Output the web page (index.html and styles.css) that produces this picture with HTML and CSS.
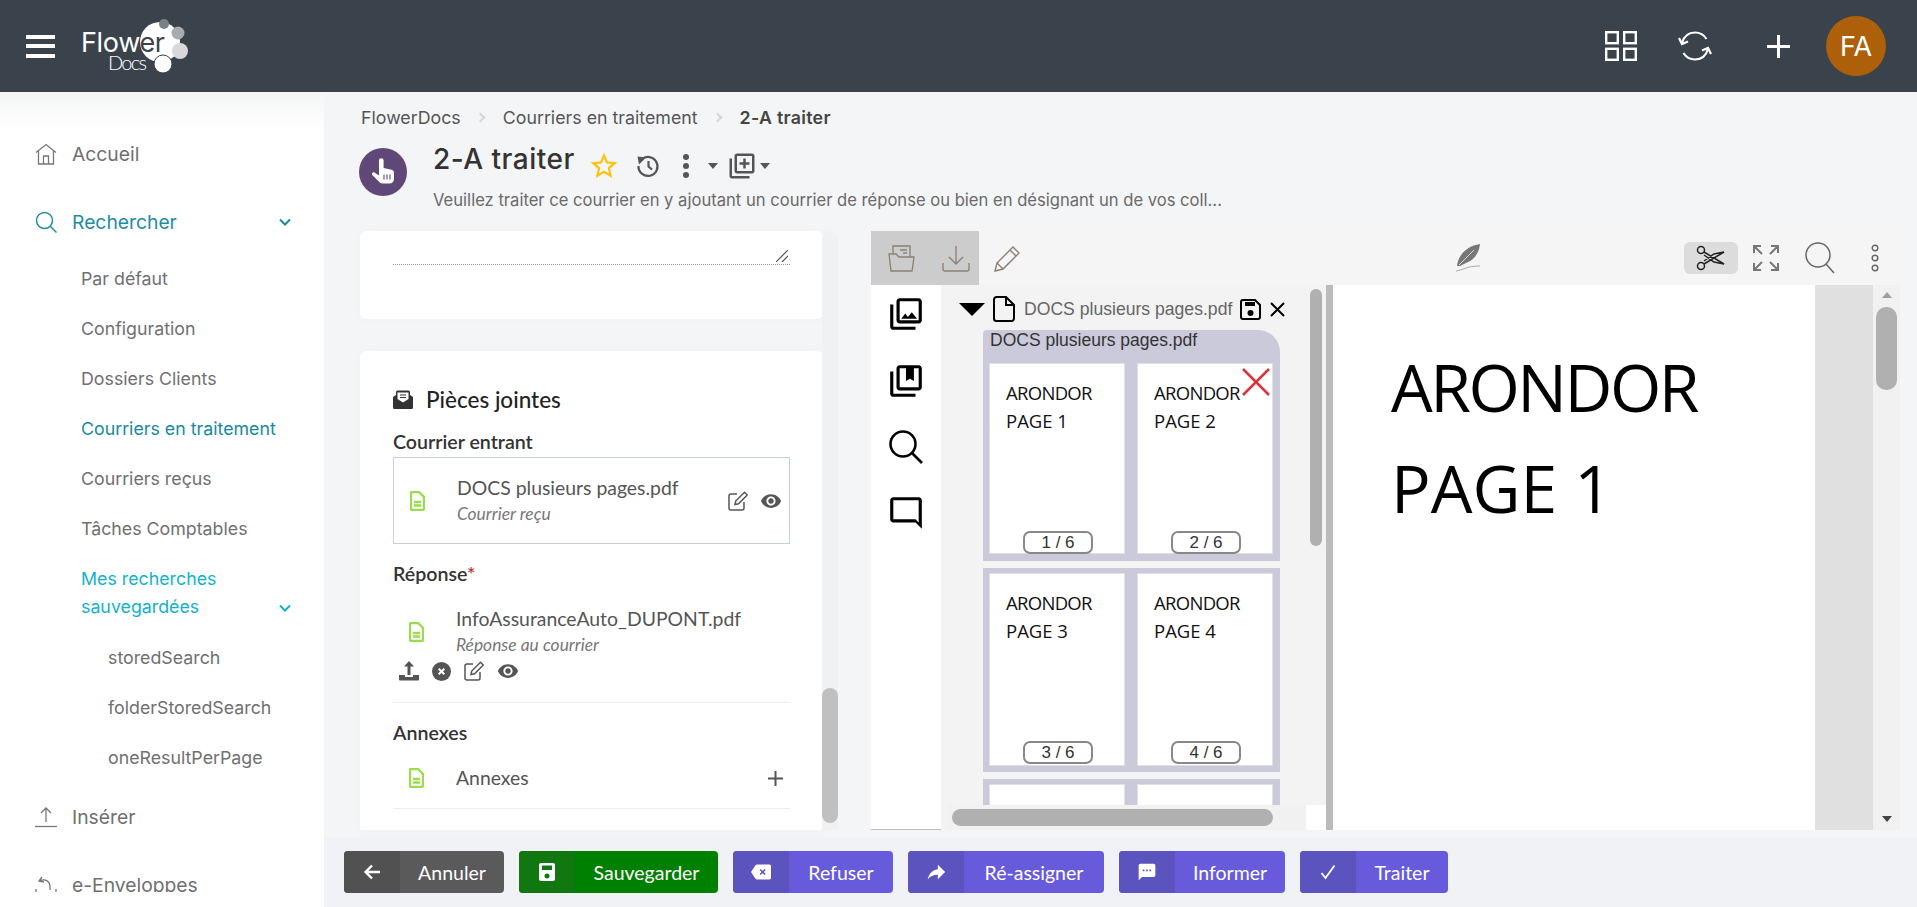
FILE: index.html
```html
<!DOCTYPE html>
<html lang="fr">
<head>
<meta charset="utf-8">
<title>FlowerDocs</title>
<link rel="stylesheet" href="styles.css">
</head>
<body>
<div class="app">
  <header class="topbar">
    <div class="burger"><span></span><span></span><span></span></div>
    <svg class="logo" width="120" height="64" viewBox="0 0 120 64">
      <circle cx="80" cy="28" r="20" fill="#fff"/>
      <text class="logo-word" x="1" y="38" textLength="84">Flow<tspan class="logo-dark">er</tspan></text>
      <text class="logo-sub" x="28" y="56" textLength="39">Docs</text>
      <circle cx="84" cy="10" r="5" fill="#7b8087"/>
      <circle cx="98" cy="19" r="6.500" fill="#a8abb0"/>
      <circle cx="100" cy="37" r="8" fill="#d7d8d9"/>
      <circle cx="83" cy="50" r="9" fill="#fff" stroke="#3a424c"/>
    </svg>
    <div class="topbar-tools">
      <svg class="tool-grid" width="32" height="30" viewBox="0 0 32 30" fill="none" stroke="#fff" stroke-width="2.400"><rect x="1.200" y="1.200" width="11.600" height="11"/><rect x="19.200" y="1.200" width="11.600" height="11"/><rect x="1.200" y="17.800" width="11.600" height="11"/><rect x="19.200" y="17.800" width="11.600" height="11"/></svg>
      <svg class="tool-sync" width="34" height="30" viewBox="0 0 34 30" fill="none" stroke="#fff" stroke-width="2.200"><path d="M4 12C6 5 11 1.500 17 1.500c5 0 9 2.500 11.500 6.500"/><path d="M30 18c-2 7-7 10.500-13 10.500-5 0-9-2.500-11.500-6.500"/><path d="M1 7l3 6 6-2.500"/><path d="M33 23l-3-6-6 2.500"/></svg>
      <svg class="tool-plus" width="23" height="23" viewBox="0 0 23 23" fill="#fff"><rect x="10" width="3" height="23"/><rect y="10" width="23" height="3"/></svg>
      <div class="avatar">FA</div>
    </div>
  </header>

  <div class="layout">
    <nav class="sidebar">
      <a class="nav-item">
        <svg width="22" height="22" viewBox="0 0 22 22" fill="none" stroke="#777" stroke-width="1.300"><path d="M1 9.500L11 1.500l10 8"/><path d="M3.500 8v13h15V8"/><path d="M8.500 21v-8h5v8"/></svg>
        Accueil
      </a>
      <a class="nav-item active">
        <svg width="22" height="22" viewBox="0 0 22 22" fill="none" stroke="#1f8ca3" stroke-width="1.500"><circle cx="9.500" cy="9.500" r="8"/><path d="M15.500 15.500L21.500 21.500"/></svg>
        Rechercher
        <svg class="chevron" width="12" height="8" viewBox="0 0 12 8" fill="none" stroke="#178a9e" stroke-width="2"><path d="M1 1.500l5 5 5-5"/></svg>
      </a>
      <div class="submenu">
        <a class="sub-item">Par défaut</a>
        <a class="sub-item">Configuration</a>
        <a class="sub-item">Dossiers Clients</a>
        <a class="sub-item current">Courriers en traitement</a>
        <a class="sub-item">Courriers reçus</a>
        <a class="sub-item">Tâches Comptables</a>
        <a class="sub-item saved">
          <span>Mes recherches sauvegardées</span>
          <svg class="chevron" width="12" height="8" viewBox="0 0 12 8" fill="none" stroke="#12b3c9" stroke-width="2"><path d="M1 1.500l5 5 5-5"/></svg>
        </a>
        <a class="sub-item nested">storedSearch</a>
        <a class="sub-item nested">folderStoredSearch</a>
        <a class="sub-item nested">oneResultPerPage</a>
      </div>
      <a class="nav-item">
        <svg width="22" height="22" viewBox="0 0 22 22" fill="none" stroke="#777" stroke-width="1.300"><path d="M11 16V2M6 7l5-5 5 5"/><path d="M0 20.500h22"/></svg>
        Insérer
      </a>
      <a class="nav-item">
        <svg width="22" height="22" viewBox="0 0 22 22" fill="none" stroke="#777" stroke-width="1.300"><path d="M1 21v-6M21 21v-6"/><path d="M7 3L4 7l5 1M4 7c6-3 11 0 11 6v3"/></svg>
        e-Enveloppes
      </a>
    </nav>

    <main class="main">
      <div class="crumbs">
        <span>FlowerDocs</span><i class="crumb-sep"></i><span>Courriers en traitement</span><i class="crumb-sep"></i><strong>2-A traiter</strong>
      </div>

      <div class="heading">
        <div class="task-icon">
          <svg width="26" height="28" viewBox="0 0 26 28"><path fill="#fff" d="M9 2.500a2.300 2.300 0 0 1 4.600 0V10l8 1.800c1.500.4 2.400 1.500 2.400 3V21c0 2.500-2 4.500-4.500 4.500h-7c-1.500 0-2.800-.7-3.700-1.900L2.300 17c-1-1.300.7-3.600 2.500-2.300L9 17.500z"/><path stroke="#5f4777" stroke-width="1.100" d="M14 16.500v5M17 16.500v5M20 16.500v5"/></svg>
        </div>
        <div class="heading-text">
          <div class="title-row">
            <h1>2-A traiter</h1>
            <div class="title-tools">
              <svg class="t-star" width="32" height="32" viewBox="0 0 24 24" fill="#ffc107"><path d="M22 9.240l-7.190-.620L12 2 9.190 8.630 2 9.240l5.460 4.730L5.820 21 12 17.270 18.180 21l-1.630-7.030L22 9.240zM12 15.400l-3.760 2.270 1-4.280-3.320-2.880 4.380-.380L12 6.100l1.710 4.040 4.380.380-3.320 2.880 1 4.280L12 15.400z"/></svg>
              <svg class="t-history" width="24" height="24" viewBox="0 0 24 24" fill="none" stroke="#555" stroke-width="2.200"><path d="M5.500 5.500A9.500 9.500 0 1 1 2.500 12"/><path d="M12.500 7v5.500l3.500 3"/><path fill="#555" stroke="none" d="M1.500 2.500l8.500 1-7 7z"/></svg>
              <svg class="t-dots" width="8" height="24" viewBox="0 0 8 24" fill="#555"><circle cx="4" cy="3" r="3"/><circle cx="4" cy="12" r="3"/><circle cx="4" cy="21" r="3"/></svg>
              <i class="t-caret"></i>
              <svg class="t-add" width="30" height="30" viewBox="0 0 24 24" fill="#555"><path d="M4 6H2v14c0 1.100.9 2 2 2h14v-2H4V6zm16-4H8c-1.100 0-2 .9-2 2v12c0 1.100.9 2 2 2h12c1.100 0 2-.9 2-2V4c0-1.100-.9-2-2-2zm0 14H8V4h12v12zm-7-2h2v-3h3V9h-3V6h-2v3h-3v2h3z"/></svg>
              <i class="t-caret t-caret-tight"></i>
            </div>
          </div>
          <p class="heading-sub">Veuillez traiter ce courrier en y ajoutant un courrier de réponse ou bien en désignant un de vos coll...</p>
        </div>
      </div>

      <div class="workspace">
        <section class="form-pane">
          <div class="cards">
            <div class="card card-note">
              <div class="note-line">
                <svg width="12" height="12" viewBox="0 0 12 12" stroke="#555" stroke-width="1.200"><path d="M0 12L12 0M6 12l6-6"/></svg>
              </div>
            </div>
            <div class="card card-files">
              <h2><svg width="20" height="19" viewBox="0 0 20 19"><path fill="#333" d="M0 7l3-2v-3a1.500 1.500 0 0 1 1.500-1.500h11A1.500 1.500 0 0 1 17 2v3l3 2v10.500a1.500 1.500 0 0 1-1.500 1.500h-17A1.500 1.500 0 0 1 0 17.500z"/><path fill="#fff" d="M4.500 2.500h11v6.500l-5.500 3.500-5.500-3.500z"/><path stroke="#333" stroke-width="1.200" d="M7 5h6M7 7.500h6"/></svg>Pièces jointes</h2>
              <h3>Courrier entrant</h3>
              <div class="doc-row doc-box">
                <svg class="doc-icon" width="15" height="20" viewBox="0 0 15 20" fill="none" stroke="#9bdc4e" stroke-width="2.400"><path d="M2.500 1h6.500l5 5v11.500a1.500 1.500 0 0 1-1.500 1.500h-10A1.500 1.500 0 0 1 1 17.500v-15A1.500 1.500 0 0 1 2.500 1z"/><path d="M4 11h7M4 14.500h7"/></svg>
                <div class="doc-text"><div class="doc-name">DOCS plusieurs pages.pdf</div><div class="doc-type">Courrier reçu</div></div>
                <div class="doc-actions">
                  <svg width="20" height="20" viewBox="0 0 20 20" fill="none" stroke="#555" stroke-width="1.500"><path d="M9 3H3a2 2 0 0 0-2 2v12a2 2 0 0 0 2 2h11a2 2 0 0 0 2-2v-6"/><path d="M7 13.500l.7-3.500L16.500 1.200l2.800 2.800-8.800 8.800z"/></svg>
                  <svg width="22" height="22" viewBox="0 0 24 24" fill="#555"><path d="M12 4.500C7 4.500 2.730 7.610 1 12c1.730 4.390 6 7.500 11 7.500s9.270-3.110 11-7.500c-1.730-4.390-6-7.500-11-7.500zM12 17c-2.760 0-5-2.240-5-5s2.240-5 5-5 5 2.240 5 5-2.240 5-5 5zm0-8c-1.660 0-3 1.340-3 3s1.340 3 3 3 3-1.340 3-3-1.340-3-3-3z"/></svg>
                </div>
              </div>
              <h3 class="label-reponse">Réponse<em>*</em></h3>
              <div class="doc-row doc-plain">
                <svg class="doc-icon" width="15" height="20" viewBox="0 0 15 20" fill="none" stroke="#9bdc4e" stroke-width="2.400"><path d="M2.500 1h6.500l5 5v11.500a1.500 1.500 0 0 1-1.500 1.500h-10A1.500 1.500 0 0 1 1 17.500v-15A1.500 1.500 0 0 1 2.500 1z"/><path d="M4 11h7M4 14.500h7"/></svg>
                <div class="doc-text"><div class="doc-name">InfoAssuranceAuto_DUPONT.pdf</div><div class="doc-type">Réponse au courrier</div></div>
              </div>
              <div class="doc-tools">
                <svg width="20" height="20" viewBox="0 0 20 20" fill="#555"><path d="M10 0l5 5.500h-3.500V14h-3V5.500H5z"/><path d="M0 14h6v2h8v-2h6v4.500a1 1 0 0 1-1 1H1a1 1 0 0 1-1-1z"/></svg>
                <svg width="19" height="19" viewBox="0 0 19 19"><circle cx="9.500" cy="9.500" r="9.500" fill="#555"/><path stroke="#fff" stroke-width="2" d="M6.700 6.700l5.600 5.600M12.300 6.700l-5.600 5.600"/></svg>
                <svg width="20" height="20" viewBox="0 0 20 20" fill="none" stroke="#555" stroke-width="1.500"><path d="M9 3H3a2 2 0 0 0-2 2v12a2 2 0 0 0 2 2h11a2 2 0 0 0 2-2v-6"/><path d="M7 13.500l.7-3.500L16.500 1.200l2.800 2.800-8.800 8.800z"/></svg>
                <svg width="22" height="22" viewBox="0 0 24 24" fill="#555"><path d="M12 4.500C7 4.500 2.730 7.610 1 12c1.730 4.390 6 7.500 11 7.500s9.270-3.110 11-7.500c-1.730-4.390-6-7.500-11-7.500zM12 17c-2.760 0-5-2.240-5-5s2.240-5 5-5 5 2.240 5 5-2.240 5-5 5zm0-8c-1.660 0-3 1.340-3 3s1.340 3 3 3 3-1.340 3-3-1.340-3-3-3z"/></svg>
              </div>
              <h3 class="label-annexes">Annexes</h3>
              <div class="doc-row doc-annex">
                <svg class="doc-icon" width="15" height="20" viewBox="0 0 15 20" fill="none" stroke="#9bdc4e" stroke-width="2.400"><path d="M2.500 1h6.500l5 5v11.500a1.500 1.500 0 0 1-1.500 1.500h-10A1.500 1.500 0 0 1 1 17.500v-15A1.500 1.500 0 0 1 2.500 1z"/><path d="M4 11h7M4 14.500h7"/></svg>
                <div class="doc-name">Annexes</div>
                <svg class="annex-plus" width="15" height="15" viewBox="0 0 15 15" fill="#555"><rect x="6.500" width="2" height="15"/><rect y="6.500" width="15" height="2"/></svg>
              </div>
            </div>
          </div>
          <div class="pane-scroll"><div class="pane-thumb"></div></div>
        </section>

        <section class="viewer">
          <div class="viewer-bar">
            <div class="vb-group">
              <svg width="27" height="27" viewBox="0 0 27 27" fill="none" stroke="#8a7f72" stroke-width="1.300"><path d="M1 9h7l3 3h15l-2 14H3z"/><path d="M5 9V1h17v11"/><path d="M12 5h7M15 8h4"/></svg>
              <svg width="28" height="27" viewBox="0 0 28 27" fill="none" stroke="#8a7f72" stroke-width="1.300"><path d="M14 1v18M7 12l7 7 7-7"/><path d="M1 18v6a2 2 0 0 0 2 2h22a2 2 0 0 0 2-2v-6"/></svg>
            </div>
            <svg class="vb-pencil" width="27" height="27" viewBox="0 0 27 27" fill="none" stroke="#8a7f72" stroke-width="1.400"><path d="M1 26l2-8L19 2l6 6L9 24z"/><path d="M3 18l6 6M16 5l6 6"/></svg>
            <svg class="vb-feather" width="25" height="28" viewBox="0 0 25 28"><path fill="#777" d="M1 22C2 12 10 2 24 0c-1 9-6 16-12 18l-8 4z"/><path fill="none" stroke="#eee" stroke-width=".8" d="M3 21L18 6"/><path fill="none" stroke="#888" stroke-width=".7" d="M0 27c8-1 10-5 24-5"/></svg>
            <div class="vb-cut">
              <svg width="30" height="26" viewBox="0 0 30 26" fill="none" stroke="#222" stroke-width="1.500"><circle cx="5" cy="5" r="3.500"/><circle cx="5" cy="21" r="3.500"/><path d="M8 7l20 12-10-2-10-7M8 19l20-12-10 2-10 7"/></svg>
            </div>
            <svg class="vb-expand" width="28" height="28" viewBox="0 0 28 28" fill="none" stroke="#777" stroke-width="2"><path d="M2 9V2h7M2 2l8 8M26 9V2h-7M26 2l-8 8M2 19v7h7M2 26l8-8M26 19v7h-7M26 26l-8-8"/></svg>
            <svg class="vb-search" width="30" height="32" viewBox="0 0 30 32" fill="none" stroke="#666" stroke-width="1.500"><circle cx="13" cy="13" r="12"/><path d="M21 22l8 9"/></svg>
            <svg class="vb-dots" width="8" height="28" viewBox="0 0 8 28" fill="none" stroke="#666" stroke-width="1.400"><circle cx="4" cy="4" r="2.800"/><circle cx="4" cy="14" r="2.800"/><circle cx="4" cy="24" r="2.800"/></svg>
          </div>

          <div class="viewer-body">
            <div class="tool-col">
              <svg width="38" height="38" viewBox="0 0 24 24"><path d="M20 4v12H8V4h12m0-2H8c-1.100 0-2 .9-2 2v12c0 1.100.9 2 2 2h12c1.100 0 2-.9 2-2V4c0-1.100-.9-2-2-2zm-8.500 9.670l1.690 2.260 2.480-3.100L19 15H9zM2 6v14c0 1.100.9 2 2 2h14v-2H4V6H2z"/></svg>
              <svg width="38" height="38" viewBox="0 0 24 24"><path d="M4 6H2v14c0 1.100.9 2 2 2h14v-2H4V6zm16-4H8c-1.100 0-2 .9-2 2v12c0 1.100.9 2 2 2h12c1.100 0 2-.9 2-2V4c0-1.100-.9-2-2-2zm0 14H8V4h4v8l2.500-1.500L17 12V4h3v12z"/></svg>
              <svg width="36" height="36" viewBox="0 0 36 36" fill="none" stroke="#000" stroke-width="2.600"><circle cx="15" cy="15" r="12.500"/><path d="M24 24l10 10"/></svg>
              <svg width="38" height="38" viewBox="0 0 24 24" class="flip"><path d="M20 2H4c-1.100 0-2 .9-2 2v18l4-4h14c1.100 0 2-.9 2-2V4c0-1.100-.9-2-2-2zm0 14H6l-2 2V4h16v12z"/></svg>
            </div>

            <div class="thumbs">
              <div class="thumbs-top">
                <div class="thumb-list">
                  <div class="file-head">
                    <i class="file-caret"></i>
                    <svg width="22" height="26" viewBox="0 0 22 26" fill="none" stroke="#000" stroke-width="2"><path d="M3.500 1H13l8 8v13.500a2.500 2.500 0 0 1-2.500 2.500h-15A2.500 2.500 0 0 1 1 22.500v-19A2.500 2.500 0 0 1 3.500 1z"/><path d="M13 1v8h8"/></svg>
                    <span class="file-name">DOCS plusieurs pages.pdf</span>
                    <svg class="file-save" width="21" height="21" viewBox="0 0 21 21"><path fill="none" stroke="#000" stroke-width="2" d="M3 1h12l5 5v12a2 2 0 0 1-2 2H3a2 2 0 0 1-2-2V3a2 2 0 0 1 2-2z"/><path d="M5 3h10v4H5z"/><circle cx="10.500" cy="14" r="3"/></svg>
                    <svg class="file-close" width="15" height="15" viewBox="0 0 15 15" stroke="#000" stroke-width="2"><path d="M1 1l13 13M14 1L1 14"/></svg>
                  </div>
                  <div class="page-group first">
                    <div class="group-title">DOCS plusieurs pages.pdf</div>
                    <div class="page-grid">
                      <div class="page-cell"><p class="brand">ARONDOR</p><p>PAGE 1</p><span class="page-num">1 / 6</span></div>
                      <div class="page-cell"><p class="brand">ARONDOR</p><p>PAGE 2</p><span class="page-num">2 / 6</span>
                        <svg class="page-remove" width="28" height="28" viewBox="0 0 28 28" stroke="#d8363c" stroke-width="2.600"><path d="M1 1l26 26M27 1L1 27"/></svg>
                      </div>
                    </div>
                  </div>
                  <div class="page-group">
                    <div class="page-grid">
                      <div class="page-cell"><p class="brand">ARONDOR</p><p>PAGE 3</p><span class="page-num">3 / 6</span></div>
                      <div class="page-cell"><p class="brand">ARONDOR</p><p>PAGE 4</p><span class="page-num">4 / 6</span></div>
                    </div>
                  </div>
                  <div class="page-group">
                    <div class="page-grid">
                      <div class="page-cell"></div>
                      <div class="page-cell"></div>
                    </div>
                  </div>
                </div>
                <div class="thumb-vscroll"><div class="thumb-vbar"></div></div>
              </div>
              <div class="thumbs-bottom">
                <div class="hscroll"><div class="hbar"></div></div>
              </div>
            </div>

            <div class="splitter"></div>
            <div class="page-view">
              <p class="brand">ARONDOR</p>
              <p>PAGE 1</p>
            </div>
            <div class="page-gutter"></div>
            <div class="page-scroll">
              <i class="arrow-up"></i>
              <div class="page-scroll-bar"></div>
              <i class="arrow-down"></i>
            </div>
          </div>
        </section>
      </div>

      <footer class="actions">
        <button class="btn btn-dark w-annuler"><span class="btn-icon"><svg width="18" height="18" viewBox="0 0 18 18" fill="none" stroke="#fff" stroke-width="2.400"><path d="M17 9H3M9 2.500L2.500 9 9 15.500"/></svg></span><span class="btn-label">Annuler</span></button>
        <button class="btn btn-green w-sauver"><span class="btn-icon"><svg width="18" height="20" viewBox="0 0 18 20"><path fill="#fff" d="M3 1h12a2 2 0 0 1 2 2v14a2 2 0 0 1-2 2H3a2 2 0 0 1-2-2V3a2 2 0 0 1 2-2z"/><path fill="#117711" d="M4 3.500h10v4.500H4z"/><circle cx="9" cy="14" r="2.500" fill="#117711"/></svg></span><span class="btn-label">Sauvegarder</span></button>
        <button class="btn w-refuser"><span class="btn-icon"><svg width="20" height="16" viewBox="0 0 24 18"><path fill="#fff" d="M22 0H7C6.300 0 5.700.3 5.400.9L0 9l5.400 8.100c.4.600.9.900 1.600.900h15c1.100 0 2-.9 2-2V2c0-1.100-.9-2-2-2z"/><path stroke="#5b54bf" stroke-width="1.800" d="M11 6l6 6M17 6l-6 6"/></svg></span><span class="btn-label">Refuser</span></button>
        <button class="btn w-assigner"><span class="btn-icon"><svg width="22" height="22" viewBox="0 0 24 24" fill="#fff"><path d="M14 9V4l8 8-8 8v-5c-5 0-8.500 1.600-11 5.100 1-5.100 4-10.100 11-11.100z"/></svg></span><span class="btn-label">Ré-assigner</span></button>
        <button class="btn w-informer"><span class="btn-icon"><svg width="20" height="20" viewBox="0 0 24 24" fill="#fff"><path d="M20 2H4c-1.100 0-1.990.9-1.990 2L2 22l4-4h14c1.100 0 2-.9 2-2V4c0-1.100-.9-2-2-2zM9 11H7V9h2v2zm4 0h-2V9h2v2zm4 0h-2V9h2v2z"/></svg></span><span class="btn-label">Informer</span></button>
        <button class="btn w-traiter"><span class="btn-icon"><svg width="16" height="16" viewBox="0 0 16 16" fill="none" stroke="#fff" stroke-width="1.800"><path d="M1.500 9l4 5L14.500 1.500"/></svg></span><span class="btn-label">Traiter</span></button>
      </footer>
    </main>
  </div>
</div>
</body>
</html>
```
FILE: styles.css
```css
* {
  box-sizing: border-box;
}
html, body {
  margin: 0;
  height: 100%;
  overflow: hidden;
}
body {
  font-family: Inter, "Noto Sans", sans-serif;
  color: #333;
  background: #f0f2f6;
}
p, h1, h2, h3 {
  margin: 0;
}
.app {
  display: flex;
  flex-direction: column;
  width: 1917px;
  height: 907px;
}

/* top bar */
.topbar {
  display: flex;
  align-items: center;
  flex: 0 0 92px;
  background: #3a424c;
}
.burger {
  display: flex;
  flex-direction: column;
  gap: 5.500px;
  width: 29px;
  margin-left: 26px;
}
.burger span {
  height: 4px;
  background: #fff;
}
.logo {
  margin-left: 25px;
}
.logo-word {
  font-family: Inter, sans-serif;
  font-size: 27px;
  font-weight: 400;
  fill: #fff;
}
.logo-dark {
  fill: #3a424c;
}
.logo-sub {
  font-family: Lato, sans-serif;
  font-size: 20px;
  font-weight: 300;
  fill: #fff;
}
.topbar-tools {
  display: flex;
  align-items: center;
  margin-left: auto;
  padding-right: 31px;
}
.tool-sync {
  margin-left: 41px;
}
.tool-plus {
  margin-left: 55px;
}
.avatar {
  display: flex;
  align-items: center;
  justify-content: center;
  width: 60px;
  height: 60px;
  margin-left: 36px;
  border-radius: 50%;
  background: #ad5f0a;
  color: #fff;
  font-size: 27px;
}

.layout {
  display: flex;
  flex: 1;
  min-height: 0;
}

/* side menu */
.sidebar {
  flex: 0 0 324px;
  height: 800px;
  padding-top: 28px;
  overflow: hidden;
  background: linear-gradient(#f4f6f6, #fff 40px);
  color: #707070;
  font-size: 19.300px;
  box-shadow: 0 115px 0 #fff;
}
.nav-item {
  display: flex;
  align-items: center;
  gap: 15px;
  height: 68px;
  padding: 0 33px 0 35px;
}
.nav-item.active {
  color: #1f8ca3;
}
.chevron {
  margin-left: auto;
  flex: none;
}
.submenu {
  margin-top: -3px;
  margin-bottom: 1px;
  font-size: 17.800px;
}
.sub-item {
  display: flex;
  align-items: center;
  height: 50px;
  padding: 0 33px 0 81px;
}
.sub-item.current {
  color: #178a9e;
}
.sub-item.saved {
  height: 79px;
  padding-top: 12px;
  padding-bottom: 12px;
  color: #12b3c9;
  line-height: 28px;
}
.sub-item.saved span {
  width: 175px;
}
.sub-item.saved .chevron {
  margin-top: 30px;
}
.sub-item.nested {
  padding-left: 108px;
}

/* main column */
.main {
  display: flex;
  flex-direction: column;
  flex: 1;
  min-width: 0;
  background: #f4f5f7;
}
.crumbs {
  display: flex;
  align-items: center;
  flex: 0 0 50px;
  padding: 1px 0 0 37px;
  font-size: 17.800px;
  color: #555;
}
.crumbs strong {
  font-weight: 600;
  letter-spacing: .3px;
  color: #444;
}
.crumb-sep {
  width: 7px;
  height: 7px;
  margin: 0 19px 0 16px;
  border-top: 2px solid #d5d6d8;
  border-right: 2px solid #d5d6d8;
  transform: rotate(45deg);
}
.heading {
  display: flex;
  flex: 0 0 89px;
  padding-left: 35px;
}
.task-icon {
  display: flex;
  align-items: center;
  justify-content: center;
  width: 48px;
  height: 48px;
  margin-top: 6px;
  border-radius: 50%;
  background: #5f4777;
}
.heading-text {
  margin-left: 26px;
}
.title-row {
  display: flex;
  height: 36px;
}
h1 {
  width: 142px;
  font-size: 28px;
  font-weight: 500;
  line-height: 34px;
  letter-spacing: .5px;
  color: #333;
  white-space: nowrap;
}
.title-tools {
  display: flex;
  align-items: center;
  height: 30px;
  margin-top: 9px;
  margin-left: 13px;
}
.t-history {
  margin-left: 16px;
}
.t-dots {
  margin-left: 22px;
}
.t-caret {
  width: 0;
  height: 0;
  margin-left: 18px;
  border-left: 5.500px solid transparent;
  border-right: 5.500px solid transparent;
  border-top: 6px solid #555;
}
.t-add {
  margin-left: 9px;
}
.t-caret-tight {
  margin-left: 3px;
}
.heading-sub {
  margin-top: 10px;
  font-size: 16.600px;
  line-height: 24px;
  color: #6a6a6a;
  white-space: nowrap;
}

.workspace {
  display: flex;
  flex: 0 0 599px;
  padding-left: 36px;
}

/* form side */
.form-pane {
  display: flex;
  flex: 0 0 478px;
}
.cards {
  display: flex;
  flex-direction: column;
  gap: 32px;
  width: 463px;
}
.card {
  background: #fff;
  border-radius: 6px;
  font-family: Lato, sans-serif;
  box-shadow: 0 0 14px rgba(0, 0, 0, .025);
}
.card-note {
  flex: 0 0 88px;
  padding: 0 33px;
}
.note-line {
  display: flex;
  align-items: flex-end;
  justify-content: flex-end;
  height: 34px;
  padding: 0 2px 2px 0;
  border-bottom: 1px dotted #999;
}
.card-files {
  flex: 1;
  padding: 33px 33px 0;
  overflow: hidden;
  border-radius: 6px 6px 0 0;
}
.card-files h2 {
  display: flex;
  align-items: center;
  gap: 13px;
  height: 30px;
  font-size: 22.500px;
  font-weight: 500;
  color: #222;
}
.card-files h3 {
  height: 24px;
  margin-top: 16px;
  font-size: 19.600px;
  font-weight: 600;
  line-height: 24px;
  color: #333;
}
.card-files h3.label-reponse {
  margin-top: 18px;
}
.card-files h3.label-annexes {
  margin-top: 18px;
}
h3 em {
  color: #c0392b;
  font-style: normal;
}
.doc-row {
  display: flex;
  align-items: center;
  padding-left: 16px;
  font-size: 19.400px;
  color: #555;
}
.doc-icon {
  flex: none;
  margin-right: 32px;
}
.doc-box {
  height: 87px;
  margin-top: 3px;
  padding-right: 7px;
  border: 1.500px solid #c6d0dc;
}
.doc-plain {
  height: 53px;
  margin-top: 19px;
}
.doc-name {
  line-height: 26px;
  color: #555;
}
.doc-type {
  font-size: 17.400px;
  font-style: italic;
  line-height: 26px;
  color: #777;
}
.doc-actions {
  display: flex;
  align-items: center;
  gap: 12px;
  margin-left: auto;
}
.doc-tools {
  display: flex;
  align-items: center;
  gap: 13px;
  height: 22px;
  margin-top: 2px;
  padding: 0 0 20px 6px;
  box-sizing: content-box;
  border-bottom: 1px solid #eee;
}
.doc-annex {
  height: 61px;
  margin-top: 3px;
  padding-right: 7px;
  border-bottom: 1px solid #eee;
}
.annex-plus {
  margin-left: auto;
}
.pane-scroll {
  width: 16px;
  margin-left: -1px;
  background: #f0f1f3;
  border-radius: 8px 8px 0 0;
}
.pane-thumb {
  height: 135px;
  margin-top: 457px;
  background: #c0c0c0;
  border-radius: 8px;
}

/* viewer */
.viewer {
  display: flex;
  flex-direction: column;
  flex: 0 0 1029px;
  margin-left: 33px;
}
.viewer-bar {
  display: flex;
  align-items: center;
  flex: 0 0 54px;
  background: #f5f5f5;
}
.vb-group {
  display: flex;
  align-items: center;
  gap: 27px;
  width: 108px;
  height: 54px;
  padding-left: 17px;
  background: #ccc;
}
.vb-pencil {
  margin-left: 15px;
}
.vb-feather {
  margin-left: 435px;
}
.vb-cut {
  display: flex;
  align-items: center;
  justify-content: center;
  width: 54px;
  height: 32px;
  margin-left: 203px;
  background: #dcdcdc;
  border-radius: 6px;
}
.vb-expand {
  margin-left: 14px;
}
.vb-search {
  margin-left: 25px;
}
.vb-dots {
  margin-left: 36px;
}
.viewer-body {
  display: flex;
  flex: 1;
  min-height: 0;
}
.tool-col {
  display: flex;
  flex-direction: column;
  align-items: center;
  gap: 29px;
  flex: 0 0 70px;
  padding-top: 10px;
  background: #fff;
  border-bottom: 1px solid #bbb;
}
.flip {
  transform: scaleX(-1);
}
.thumbs {
  display: flex;
  flex-direction: column;
  flex: 0 0 385px;
  background: #f3f3f3;
}
.thumbs-top {
  display: flex;
  flex: 0 0 520px;
  min-height: 0;
}
.thumb-list {
  flex: 0 0 365px;
  overflow: hidden;
  padding-top: 11px;
  font-family: "Liberation Sans", Arial, sans-serif;
}
.file-head {
  display: flex;
  align-items: center;
  height: 26px;
  margin-bottom: 8px;
  padding-left: 18px;
}
.file-caret {
  width: 0;
  height: 0;
  margin-right: 8px;
  border-left: 13px solid transparent;
  border-right: 13px solid transparent;
  border-top: 13px solid #000;
}
.file-name {
  margin-left: 9px;
  font-size: 17.600px;
  color: #666;
  white-space: nowrap;
}
.file-save {
  margin-left: 8px;
}
.file-close {
  margin-left: 9px;
}
.page-group {
  width: 297px;
  margin-left: 42px;
  margin-bottom: 7px;
  padding: 5px 6px 6px;
  background: #cbcadb;
}
.page-group.first {
  padding-top: 0;
  padding-bottom: 7px;
  border-radius: 4px 22px 0 0;
}
.group-title {
  height: 33px;
  padding-left: 1px;
  font-size: 17.500px;
  line-height: 20px;
  color: #333;
}
.page-grid {
  display: grid;
  grid-template-columns: 136px 136px;
  gap: 12px;
}
.page-cell {
  position: relative;
  display: flex;
  flex-direction: column;
  height: 193px;
  padding: 15px 0 0 16px;
  background: #fff;
  border: 1px solid #dfdfe8;
  font-family: "Open Sans", sans-serif;
  font-size: 18.500px;
  line-height: 27.500px;
  color: #111;
}
.page-cell .brand {
  letter-spacing: -.7px;
}
.first .page-cell {
  height: 191px;
}
.page-num {
  width: 70px;
  height: 23px;
  margin: auto 0 1px 17px;
  border: 2px solid #888;
  border-radius: 7px;
  font-family: "Liberation Sans", Arial, sans-serif;
  font-size: 17px;
  line-height: 19px;
  text-align: center;
  color: #333;
}
.first .page-num {
  margin-bottom: -1px;
}
.page-remove {
  position: absolute;
  top: 4px;
  right: 2px;
}
.thumb-vscroll {
  flex: 0 0 20px;
  padding: 4px 4px 0;
}
.thumb-vbar {
  width: 12px;
  height: 257px;
  background: #b0b0b0;
  border-radius: 6px;
}
.thumbs-bottom {
  flex: 1;
  padding-left: 7px;
  padding-right: 20px;
  background: linear-gradient(90deg, #f3f3f3 365px, #fff 365px);
}
.hscroll {
  height: 25px;
  padding: 4px 4px;
  background: #f1f1f1;
}
.hbar {
  width: 321px;
  height: 17px;
  background: #b0b0b0;
  border-radius: 9px;
}
.splitter {
  flex: 0 0 7px;
  background: #bbb;
}
.page-view {
  flex: 0 0 482px;
  padding: 51px 0 0 58px;
  background: #fff;
  font-family: "Open Sans", sans-serif;
  font-size: 66px;
  line-height: 101px;
  color: #000;
}
.page-view .brand {
  letter-spacing: -2.500px;
}
.page-gutter {
  flex: 0 0 58px;
  background: #e0e0e0;
}
.page-scroll {
  display: flex;
  flex-direction: column;
  align-items: center;
  flex: 0 0 27px;
  padding-top: 7px;
  background: #f1f1f1;
}
.arrow-up, .arrow-down {
  width: 0;
  height: 0;
  border-left: 5px solid transparent;
  border-right: 5px solid transparent;
}
.arrow-up {
  border-bottom: 6px solid #a0a0a0;
}
.arrow-down {
  margin-top: auto;
  margin-bottom: 8px;
  border-top: 6px solid #444;
}
.page-scroll-bar {
  width: 21px;
  height: 83px;
  margin-top: 9px;
  background: #b0b0b0;
  border-radius: 10px;
}

/* bottom buttons */
.actions {
  display: flex;
  gap: 15px;
  flex: 1;
  margin-top: 7px;
  padding: 14px 0 0 20px;
  background: #f0f2f6;
}
.btn {
  display: flex;
  align-items: stretch;
  height: 42px;
  padding: 0;
  border: none;
  border-radius: 4px;
  overflow: hidden;
  background: #675bdc;
  color: #fff;
  font-family: Lato, sans-serif;
  font-size: 19.500px;
}
.btn-icon {
  display: flex;
  align-items: center;
  justify-content: center;
  flex: 0 0 56px;
  background: #5b54bf;
}
.btn-label {
  flex: 1;
  align-self: center;
  text-align: center;
}
.btn-dark {
  background: #5a5a5a;
}
.btn-dark .btn-icon {
  background: #515151;
}
.btn-green {
  background: #008000;
}
.btn-green .btn-icon {
  background: #117711;
}
.w-annuler { width: 160px; }
.w-sauver { width: 199px; }
.w-refuser { width: 160px; }
.w-assigner { width: 196px; }
.w-informer { width: 166px; }
.w-traiter { width: 148px; }
```
